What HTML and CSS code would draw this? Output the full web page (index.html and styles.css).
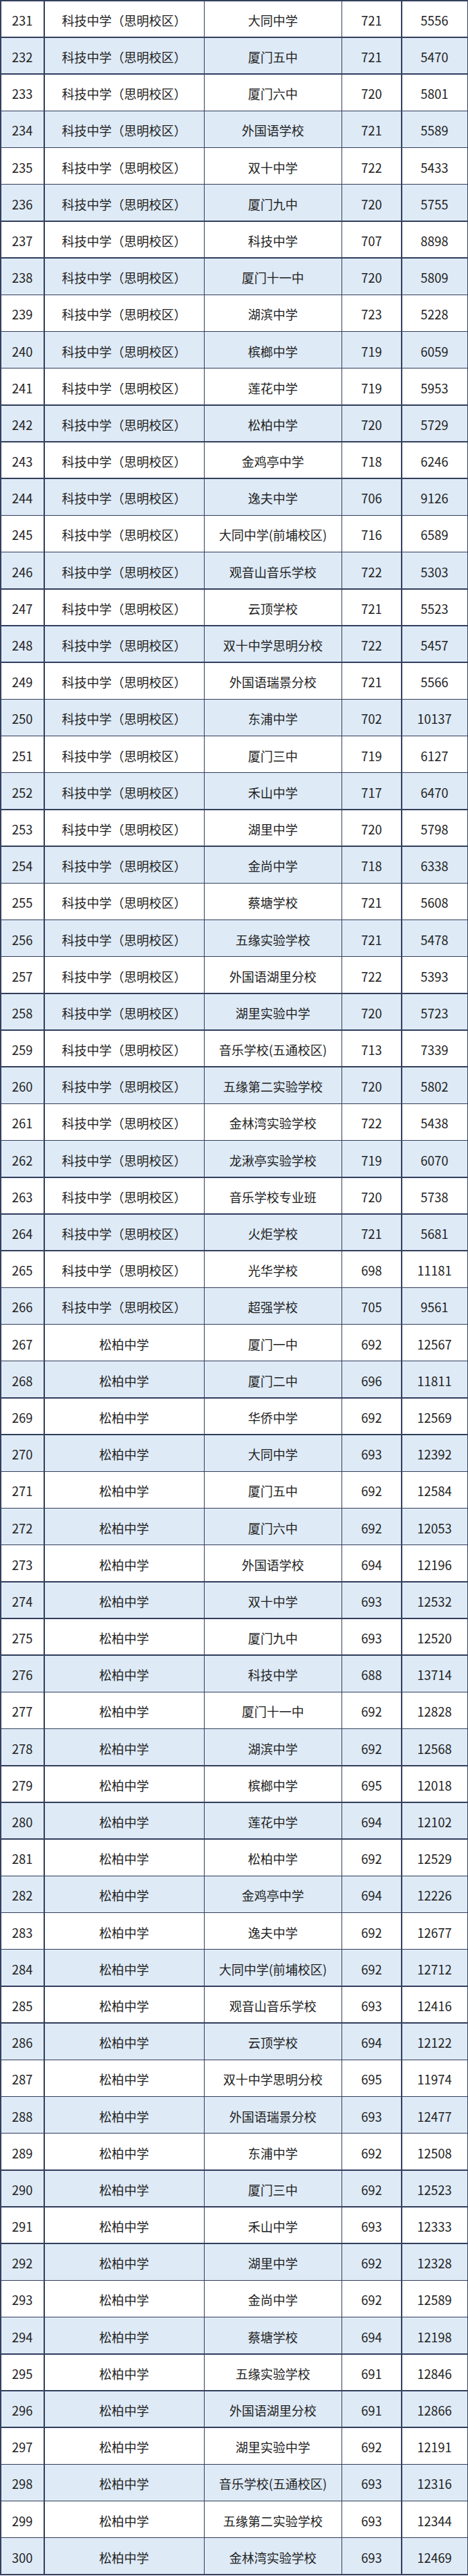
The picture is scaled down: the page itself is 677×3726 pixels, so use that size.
FILE: index.html
```html
<!DOCTYPE html>
<html lang="zh-CN">
<head>
<meta charset="utf-8">
<title>录取排名表</title>
<link rel="stylesheet" href="styles.css">
</head>
<body>
<div class="table">
<div class="row"><div class="c">231</div><div class="c">科技中学（思明校区）</div><div class="c">大同中学</div><div class="c">721</div><div class="c">5556</div></div>
<div class="row alt"><div class="c">232</div><div class="c">科技中学（思明校区）</div><div class="c">厦门五中</div><div class="c">721</div><div class="c">5470</div></div>
<div class="row"><div class="c">233</div><div class="c">科技中学（思明校区）</div><div class="c">厦门六中</div><div class="c">720</div><div class="c">5801</div></div>
<div class="row alt"><div class="c">234</div><div class="c">科技中学（思明校区）</div><div class="c">外国语学校</div><div class="c">721</div><div class="c">5589</div></div>
<div class="row"><div class="c">235</div><div class="c">科技中学（思明校区）</div><div class="c">双十中学</div><div class="c">722</div><div class="c">5433</div></div>
<div class="row alt"><div class="c">236</div><div class="c">科技中学（思明校区）</div><div class="c">厦门九中</div><div class="c">720</div><div class="c">5755</div></div>
<div class="row"><div class="c">237</div><div class="c">科技中学（思明校区）</div><div class="c">科技中学</div><div class="c">707</div><div class="c">8898</div></div>
<div class="row alt"><div class="c">238</div><div class="c">科技中学（思明校区）</div><div class="c">厦门十一中</div><div class="c">720</div><div class="c">5809</div></div>
<div class="row"><div class="c">239</div><div class="c">科技中学（思明校区）</div><div class="c">湖滨中学</div><div class="c">723</div><div class="c">5228</div></div>
<div class="row alt"><div class="c">240</div><div class="c">科技中学（思明校区）</div><div class="c">槟榔中学</div><div class="c">719</div><div class="c">6059</div></div>
<div class="row"><div class="c">241</div><div class="c">科技中学（思明校区）</div><div class="c">莲花中学</div><div class="c">719</div><div class="c">5953</div></div>
<div class="row alt"><div class="c">242</div><div class="c">科技中学（思明校区）</div><div class="c">松柏中学</div><div class="c">720</div><div class="c">5729</div></div>
<div class="row"><div class="c">243</div><div class="c">科技中学（思明校区）</div><div class="c">金鸡亭中学</div><div class="c">718</div><div class="c">6246</div></div>
<div class="row alt"><div class="c">244</div><div class="c">科技中学（思明校区）</div><div class="c">逸夫中学</div><div class="c">706</div><div class="c">9126</div></div>
<div class="row"><div class="c">245</div><div class="c">科技中学（思明校区）</div><div class="c">大同中学(前埔校区)</div><div class="c">716</div><div class="c">6589</div></div>
<div class="row alt"><div class="c">246</div><div class="c">科技中学（思明校区）</div><div class="c">观音山音乐学校</div><div class="c">722</div><div class="c">5303</div></div>
<div class="row"><div class="c">247</div><div class="c">科技中学（思明校区）</div><div class="c">云顶学校</div><div class="c">721</div><div class="c">5523</div></div>
<div class="row alt"><div class="c">248</div><div class="c">科技中学（思明校区）</div><div class="c">双十中学思明分校</div><div class="c">722</div><div class="c">5457</div></div>
<div class="row"><div class="c">249</div><div class="c">科技中学（思明校区）</div><div class="c">外国语瑞景分校</div><div class="c">721</div><div class="c">5566</div></div>
<div class="row alt"><div class="c">250</div><div class="c">科技中学（思明校区）</div><div class="c">东浦中学</div><div class="c">702</div><div class="c">10137</div></div>
<div class="row"><div class="c">251</div><div class="c">科技中学（思明校区）</div><div class="c">厦门三中</div><div class="c">719</div><div class="c">6127</div></div>
<div class="row alt"><div class="c">252</div><div class="c">科技中学（思明校区）</div><div class="c">禾山中学</div><div class="c">717</div><div class="c">6470</div></div>
<div class="row"><div class="c">253</div><div class="c">科技中学（思明校区）</div><div class="c">湖里中学</div><div class="c">720</div><div class="c">5798</div></div>
<div class="row alt"><div class="c">254</div><div class="c">科技中学（思明校区）</div><div class="c">金尚中学</div><div class="c">718</div><div class="c">6338</div></div>
<div class="row"><div class="c">255</div><div class="c">科技中学（思明校区）</div><div class="c">蔡塘学校</div><div class="c">721</div><div class="c">5608</div></div>
<div class="row alt"><div class="c">256</div><div class="c">科技中学（思明校区）</div><div class="c">五缘实验学校</div><div class="c">721</div><div class="c">5478</div></div>
<div class="row"><div class="c">257</div><div class="c">科技中学（思明校区）</div><div class="c">外国语湖里分校</div><div class="c">722</div><div class="c">5393</div></div>
<div class="row alt"><div class="c">258</div><div class="c">科技中学（思明校区）</div><div class="c">湖里实验中学</div><div class="c">720</div><div class="c">5723</div></div>
<div class="row"><div class="c">259</div><div class="c">科技中学（思明校区）</div><div class="c">音乐学校(五通校区)</div><div class="c">713</div><div class="c">7339</div></div>
<div class="row alt"><div class="c">260</div><div class="c">科技中学（思明校区）</div><div class="c">五缘第二实验学校</div><div class="c">720</div><div class="c">5802</div></div>
<div class="row"><div class="c">261</div><div class="c">科技中学（思明校区）</div><div class="c">金林湾实验学校</div><div class="c">722</div><div class="c">5438</div></div>
<div class="row alt"><div class="c">262</div><div class="c">科技中学（思明校区）</div><div class="c">龙湫亭实验学校</div><div class="c">719</div><div class="c">6070</div></div>
<div class="row"><div class="c">263</div><div class="c">科技中学（思明校区）</div><div class="c">音乐学校专业班</div><div class="c">720</div><div class="c">5738</div></div>
<div class="row alt"><div class="c">264</div><div class="c">科技中学（思明校区）</div><div class="c">火炬学校</div><div class="c">721</div><div class="c">5681</div></div>
<div class="row"><div class="c">265</div><div class="c">科技中学（思明校区）</div><div class="c">光华学校</div><div class="c">698</div><div class="c">11181</div></div>
<div class="row alt"><div class="c">266</div><div class="c">科技中学（思明校区）</div><div class="c">超强学校</div><div class="c">705</div><div class="c">9561</div></div>
<div class="row"><div class="c">267</div><div class="c">松柏中学</div><div class="c">厦门一中</div><div class="c">692</div><div class="c">12567</div></div>
<div class="row alt"><div class="c">268</div><div class="c">松柏中学</div><div class="c">厦门二中</div><div class="c">696</div><div class="c">11811</div></div>
<div class="row"><div class="c">269</div><div class="c">松柏中学</div><div class="c">华侨中学</div><div class="c">692</div><div class="c">12569</div></div>
<div class="row alt"><div class="c">270</div><div class="c">松柏中学</div><div class="c">大同中学</div><div class="c">693</div><div class="c">12392</div></div>
<div class="row"><div class="c">271</div><div class="c">松柏中学</div><div class="c">厦门五中</div><div class="c">692</div><div class="c">12584</div></div>
<div class="row alt"><div class="c">272</div><div class="c">松柏中学</div><div class="c">厦门六中</div><div class="c">692</div><div class="c">12053</div></div>
<div class="row"><div class="c">273</div><div class="c">松柏中学</div><div class="c">外国语学校</div><div class="c">694</div><div class="c">12196</div></div>
<div class="row alt"><div class="c">274</div><div class="c">松柏中学</div><div class="c">双十中学</div><div class="c">693</div><div class="c">12532</div></div>
<div class="row"><div class="c">275</div><div class="c">松柏中学</div><div class="c">厦门九中</div><div class="c">693</div><div class="c">12520</div></div>
<div class="row alt"><div class="c">276</div><div class="c">松柏中学</div><div class="c">科技中学</div><div class="c">688</div><div class="c">13714</div></div>
<div class="row"><div class="c">277</div><div class="c">松柏中学</div><div class="c">厦门十一中</div><div class="c">692</div><div class="c">12828</div></div>
<div class="row alt"><div class="c">278</div><div class="c">松柏中学</div><div class="c">湖滨中学</div><div class="c">692</div><div class="c">12568</div></div>
<div class="row"><div class="c">279</div><div class="c">松柏中学</div><div class="c">槟榔中学</div><div class="c">695</div><div class="c">12018</div></div>
<div class="row alt"><div class="c">280</div><div class="c">松柏中学</div><div class="c">莲花中学</div><div class="c">694</div><div class="c">12102</div></div>
<div class="row"><div class="c">281</div><div class="c">松柏中学</div><div class="c">松柏中学</div><div class="c">692</div><div class="c">12529</div></div>
<div class="row alt"><div class="c">282</div><div class="c">松柏中学</div><div class="c">金鸡亭中学</div><div class="c">694</div><div class="c">12226</div></div>
<div class="row"><div class="c">283</div><div class="c">松柏中学</div><div class="c">逸夫中学</div><div class="c">692</div><div class="c">12677</div></div>
<div class="row alt"><div class="c">284</div><div class="c">松柏中学</div><div class="c">大同中学(前埔校区)</div><div class="c">692</div><div class="c">12712</div></div>
<div class="row"><div class="c">285</div><div class="c">松柏中学</div><div class="c">观音山音乐学校</div><div class="c">693</div><div class="c">12416</div></div>
<div class="row alt"><div class="c">286</div><div class="c">松柏中学</div><div class="c">云顶学校</div><div class="c">694</div><div class="c">12122</div></div>
<div class="row"><div class="c">287</div><div class="c">松柏中学</div><div class="c">双十中学思明分校</div><div class="c">695</div><div class="c">11974</div></div>
<div class="row alt"><div class="c">288</div><div class="c">松柏中学</div><div class="c">外国语瑞景分校</div><div class="c">693</div><div class="c">12477</div></div>
<div class="row"><div class="c">289</div><div class="c">松柏中学</div><div class="c">东浦中学</div><div class="c">692</div><div class="c">12508</div></div>
<div class="row alt"><div class="c">290</div><div class="c">松柏中学</div><div class="c">厦门三中</div><div class="c">692</div><div class="c">12523</div></div>
<div class="row"><div class="c">291</div><div class="c">松柏中学</div><div class="c">禾山中学</div><div class="c">693</div><div class="c">12333</div></div>
<div class="row alt"><div class="c">292</div><div class="c">松柏中学</div><div class="c">湖里中学</div><div class="c">692</div><div class="c">12328</div></div>
<div class="row"><div class="c">293</div><div class="c">松柏中学</div><div class="c">金尚中学</div><div class="c">692</div><div class="c">12589</div></div>
<div class="row alt"><div class="c">294</div><div class="c">松柏中学</div><div class="c">蔡塘学校</div><div class="c">694</div><div class="c">12198</div></div>
<div class="row"><div class="c">295</div><div class="c">松柏中学</div><div class="c">五缘实验学校</div><div class="c">691</div><div class="c">12846</div></div>
<div class="row alt"><div class="c">296</div><div class="c">松柏中学</div><div class="c">外国语湖里分校</div><div class="c">691</div><div class="c">12866</div></div>
<div class="row"><div class="c">297</div><div class="c">松柏中学</div><div class="c">湖里实验中学</div><div class="c">692</div><div class="c">12191</div></div>
<div class="row alt"><div class="c">298</div><div class="c">松柏中学</div><div class="c">音乐学校(五通校区)</div><div class="c">693</div><div class="c">12316</div></div>
<div class="row"><div class="c">299</div><div class="c">松柏中学</div><div class="c">五缘第二实验学校</div><div class="c">693</div><div class="c">12344</div></div>
<div class="row alt"><div class="c">300</div><div class="c">松柏中学</div><div class="c">金林湾实验学校</div><div class="c">693</div><div class="c">12469</div></div>
</div>
</body>
</html>
```

FILE: styles.css
```css
html, body {
  margin: 0;
  padding: 0;
  background: #ffffff;
}

body {
  font-family: "Noto Sans CJK SC", "Noto Sans", sans-serif;
  font-size: 18px;
  color: #222222;
}

.table {
  display: grid;
  grid-template-columns: 61.5px 230px 197.5px 85px 94px;
  grid-auto-rows: 51.69px;
  gap: 1.5px;
  padding: 1.5px;
  background: #34405e;
  width: 677px;
  box-sizing: border-box;
}

.row {
  display: contents;
}

.c {
  display: flex;
  align-items: center;
  justify-content: center;
  background: #ffffff;
  white-space: nowrap;
  padding-top: 3px;
  box-sizing: border-box;
  line-height: 1;
}

.row.alt .c {
  background: #deeaf6;
}
```
